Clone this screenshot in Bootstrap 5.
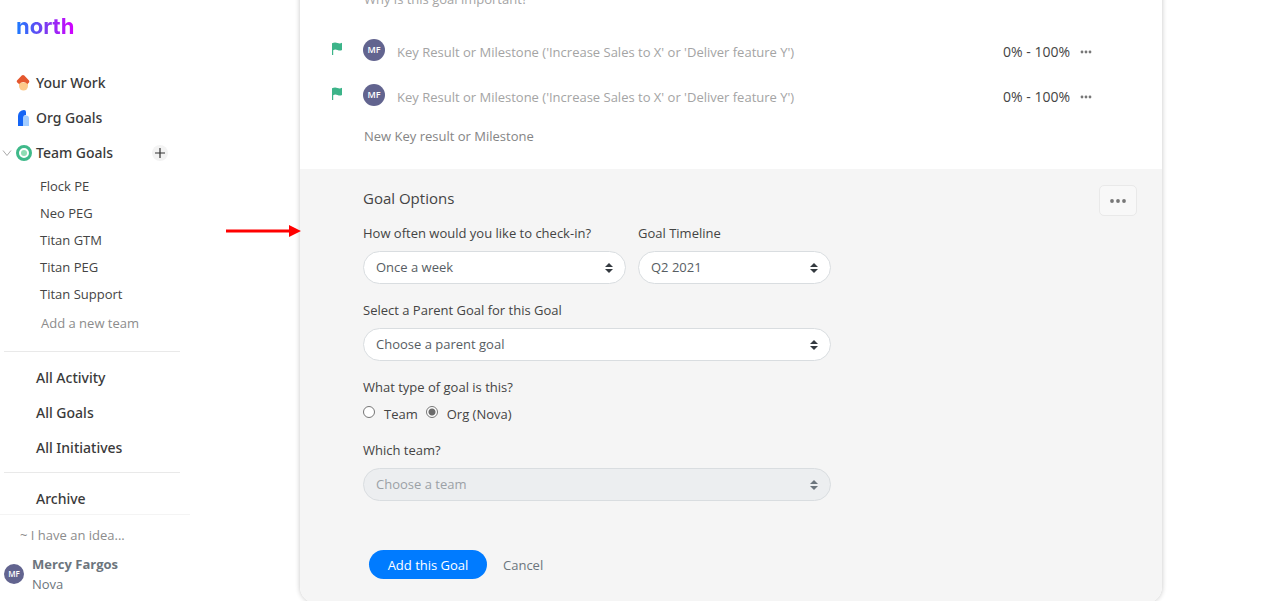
<!DOCTYPE html>
<html lang="en">
<head>
<meta charset="utf-8">
<meta name="viewport" content="width=device-width, initial-scale=1">
<title>north - New goal</title>
<link href="https://cdn.jsdelivr.net/npm/bootstrap@5.3.0/dist/css/bootstrap.min.css" rel="stylesheet">
<style>
  body { font-family: "Open Sans", "Noto Sans", sans-serif; font-size: 13px; line-height: 20px; color: #444; background: #fff; }
  a { color: inherit; text-decoration: none; }
  .sidebar { width: 190px; flex: none; }
  .sidebar > * { flex-shrink: 0; }
  .brand { font: 700 22px/28px Inter, sans-serif; padding: 12px 0 0 16px; height: 65px; }
  .brand a { background: linear-gradient(90deg, #1a7cff, #7a3cf0 50%, #d400ff); -webkit-background-clip: text; background-clip: text; color: transparent; }
  .side-item { height: 35px; font-family: "Noto Sans", sans-serif; font-size: 14px; font-weight: 500; color: #3a3a3a; }
  .side-item .slot { width: 36px; height: 16px; flex: none; padding-right: 4px; }
  .side-last { height: 33px; padding-top: 2px; }
  .teams { padding-top: 2px; }
  .sub-item { height: 27px; padding-left: 40px; }
  .sub-new { height: 32px; padding-left: 41px; color: #8c8c8c; }
  .rule { height: 1px; background: #e9e9e9; margin: 12px 10px 8px 4px; }
  .rule-low { margin-top: 7px; }
  .chevron { width: 10px; }
  .add-team { width: 16px; height: 16px; border: 0; border-radius: 50%; background: #f3f3f3; margin-right: 22px; }
  .foot-line { height: 1px; background: #f4f4f4; }
  .idea { color: #8c8c8c; padding-left: 20px; height: 39px; }
  .user { color: #6c757d; padding: 0 0 7px 4px; gap: 8px; }
  .avatar { border-radius: 50%; background: #62648f; color: #fff; flex: none; font-weight: 600; }
  .avatar-sm { width: 20px; height: 20px; font-size: 8px; }
  .avatar-md { width: 22px; height: 22px; font-size: 9px; margin: 0 12px 4px 0; }
  .main { padding: 0 113px 0 110px; }
  .goal-card { border-radius: 16px; box-shadow: 0 0 5px rgba(0,0,0,.24); margin-top: -40px; padding-top: 29px; overflow: hidden; background: #fff; }
  .why { height: 40px; padding-left: 64px; }
  .kr { height: 45px; padding: 0 68px 0 31px; }
  .range { font-size: 14px; }
  .flag { width: 12px; margin: 0 20px 6px 0; }
  .bare { border: 0; background: transparent; padding: 0; outline: 0; color: inherit; }
  .bare::placeholder { color: #a4a4a4; opacity: 1; }
  .new-kr { height: 50px; padding: 0 0 16px 64px; }
  .new-kr .bare::placeholder { color: #858585; }
  .options { background: #f5f5f5; padding: 16px 25px 24px 63px; }
  .options h2 { font-size: 15px; line-height: 26px; font-weight: 400; margin: 0; }
  .more { width: 38px; height: 31px; border: 1px solid #e9e9e9; border-radius: 5px; background: #f8f8f8; margin-bottom: 7px; }
  .fields { max-width: 468px; }
  .fields .form-label { display: block; margin: 0 0 8px; font-size: 13px; line-height: 20px; }
  .fields legend.form-label { margin-bottom: 7px; }
  .pick { height: 33px; border: 1px solid #d9dde0; border-radius: 17px; font-size: 13px; line-height: 20px; padding: 5px 24px 6px 12px; color: #575d63; background: #fff url("data:image/svg+xml,%3csvg xmlns='http://www.w3.org/2000/svg' viewBox='0 0 4 5'%3e%3cpath fill='%23343a40' d='M2 0L0 2h4zm0 5L0 3h4z'/%3e%3c/svg%3e") no-repeat right 12px center / 8px 10px; }
  .pick:disabled { color: #9ba1a6; background-color: #eceef0; background-image: url("data:image/svg+xml,%3csvg xmlns='http://www.w3.org/2000/svg' viewBox='0 0 4 5'%3e%3cpath fill='%236c757d' d='M2 0L0 2h4zm0 5L0 3h4z'/%3e%3c/svg%3e"); }
  .field { margin-bottom: 16px; }
  .how-often { flex: 263 1 0; }
  .timeline { flex: 193 1 0; }
  .tick { width: 12px; height: 12px; margin: 0 9px 4px 0; appearance: none; border: 1px solid #767676; border-radius: 50%; background: #fff; }
  .tick:checked { background: radial-gradient(circle, #6b6b6b 0 3px, #fff 4px); }
  .add-goal { height: 29px; width: 118px; border-radius: 15px; background: #007bff; color: #fff; border: 0; padding: 0; }
  .cancel { color: #6c757d; }
  .actions { gap: 16px; padding: 49px 0 0 6px; }
  .pointer { position: absolute; left: 226px; top: 225px; }
</style>
</head>
<body>
<div class="d-flex vh-100 overflow-hidden">
  <nav class="sidebar d-flex flex-column">
    <div class="brand"><a href="#">north</a></div>
    <a class="side-item d-flex align-items-center" href="#"><span class="slot d-flex justify-content-end">
      <svg width="16" height="16" viewBox="0 0 16 16"><path d="M3 7.500h9V11a4.500 4.500 0 0 1-9 0Z" fill="#fdc98a"/><path d="M7 0q.8 0 1.300.6L13 5.400q.7 1 0 2L11.500 9Q9.500 7 7.300 7T3 9L1 7.200q-.6-1 0-1.800L5.700.6Q6.200 0 7 0Z" fill="#e4572e"/></svg></span>Your Work</a>
    <a class="side-item d-flex align-items-center" href="#"><span class="slot d-flex justify-content-end">
      <svg width="16" height="16" viewBox="0 0 16 16"><path d="M7 5.500h3a3 3 0 0 1 3 3V16H6Z" fill="#a3cdff"/><path d="M2 16V6a6 6 0 0 1 6-6 2 2 0 0 1 2 2v3a3 3 0 0 0-3 3v8Z" fill="#1565f5"/></svg></span>Org Goals</a>
    <div class="side-item d-flex align-items-center"><span class="slot d-flex justify-content-end align-items-center">
      <svg class="chevron me-1" height="8" viewBox="0 0 10 8"><path d="M1 1.500 5 6.500 9 1.500" fill="none" stroke="#aaa"/></svg>
      <svg class="flex-shrink-0" width="16" height="16" viewBox="0 0 16 16"><circle cx="8" cy="8" r="6.500" fill="#fff" stroke="#3fb98a" stroke-width="3"/><circle cx="8" cy="8" r="3" fill="#8fdcb4"/></svg></span><a href="#">Team Goals</a>
      <button class="add-team ms-auto p-0 d-flex align-items-center justify-content-center" aria-label="Add team"><svg width="12" height="12" viewBox="0 0 12 12"><path d="M6 1v10M1 6h10" stroke="#333" stroke-width="1.200"/></svg></button></div>
    <div class="teams">
      <a class="sub-item d-flex align-items-center" href="#">Flock PE</a>
      <a class="sub-item d-flex align-items-center" href="#">Neo PEG</a>
      <a class="sub-item d-flex align-items-center" href="#">Titan GTM</a>
      <a class="sub-item d-flex align-items-center" href="#">Titan PEG</a>
      <a class="sub-item d-flex align-items-center" href="#">Titan Support</a>
      <a class="sub-new d-flex align-items-center" href="#">Add a new team</a>
    </div>
    <div class="rule"></div>
    <a class="side-item d-flex align-items-center" href="#"><span class="slot"></span>All Activity</a>
    <a class="side-item d-flex align-items-center" href="#"><span class="slot"></span>All Goals</a>
    <a class="side-item d-flex align-items-center" href="#"><span class="slot"></span>All Initiatives</a>
    <div class="rule rule-low"></div>
    <a class="side-item side-last d-flex align-items-center" href="#"><span class="slot"></span>Archive</a>
    <div class="mt-auto">
      <div class="foot-line"></div>
      <a class="idea d-flex align-items-center" href="#">~ I have an idea...</a>
      <a class="user d-flex align-items-center" href="#"><span class="avatar avatar-sm d-flex align-items-center justify-content-center">MF</span><span><strong class="d-block">Mercy Fargos</strong>Nova</span></a>
    </div>
  </nav>
  <main class="main flex-grow-1">
    <form class="goal-card">
      <div class="why"><input class="bare w-75" aria-label="Why" placeholder="Why is this goal important?"></div>
      <div class="kr d-flex align-items-center">
        <svg class="flag" height="13" viewBox="0 0 12 13"><path d="M1 1.200Q4 0 6.500 1T11 .7V8Q9 9 6.500 8T2.200 8.200V13H1Z" fill="#3cb489"/></svg>
        <span class="avatar avatar-md d-flex align-items-center justify-content-center">MF</span>
        <input class="bare flex-grow-1" aria-label="Key result 1" placeholder="Key Result or Milestone ('Increase Sales to X' or 'Deliver feature Y')">
        <span class="range">0% - 100%</span>
        <button type="button" class="bare ms-2 d-flex" aria-label="Key result menu"><svg width="16" height="4" viewBox="0 0 16 4" fill="#777"><circle cx="4" cy="2" r="1.400"/><circle cx="8" cy="2" r="1.400"/><circle cx="12" cy="2" r="1.400"/></svg></button>
      </div>
      <div class="kr d-flex align-items-center">
        <svg class="flag" height="13" viewBox="0 0 12 13"><path d="M1 1.200Q4 0 6.500 1T11 .7V8Q9 9 6.500 8T2.200 8.200V13H1Z" fill="#3cb489"/></svg>
        <span class="avatar avatar-md d-flex align-items-center justify-content-center">MF</span>
        <input class="bare flex-grow-1" aria-label="Key result 2" placeholder="Key Result or Milestone ('Increase Sales to X' or 'Deliver feature Y')">
        <span class="range">0% - 100%</span>
        <button type="button" class="bare ms-2 d-flex" aria-label="Key result menu"><svg width="16" height="4" viewBox="0 0 16 4" fill="#777"><circle cx="4" cy="2" r="1.400"/><circle cx="8" cy="2" r="1.400"/><circle cx="12" cy="2" r="1.400"/></svg></button>
      </div>
      <div class="new-kr d-flex align-items-center"><input class="bare w-75" aria-label="New key result" placeholder="New Key result or Milestone"></div>
      <section class="options">
        <div class="d-flex justify-content-between align-items-start">
          <h2>Goal Options</h2>
          <button type="button" class="more p-0 d-flex align-items-center justify-content-center" aria-label="Goal menu"><svg width="16" height="4" viewBox="0 0 16 4" fill="#777"><circle cx="2" cy="2" r="1.900"/><circle cx="8" cy="2" r="1.900"/><circle cx="14" cy="2" r="1.900"/></svg></button>
        </div>
        <div class="fields">
          <div class="field d-flex">
            <div class="how-often me-2 pe-1"><label class="form-label" for="often">How often would you like to check-in?</label>
              <select class="form-select pick" id="often"><option>Once a week</option></select></div>
            <div class="timeline"><label class="form-label" for="time">Goal Timeline</label>
              <select class="form-select pick" id="time"><option>Q2 2021</option></select></div>
          </div>
          <div class="field"><label class="form-label" for="parent">Select a Parent Goal for this Goal</label>
            <select class="form-select pick" id="parent"><option>Choose a parent goal</option></select></div>
          <fieldset class="field">
            <legend class="form-label float-none">What type of goal is this?</legend>
            <div class="d-flex">
              <label class="d-flex align-items-center me-2"><input class="tick" type="radio" name="kind">Team</label>
              <label class="d-flex align-items-center"><input class="tick" type="radio" name="kind" checked>Org (Nova)</label>
            </div>
          </fieldset>
          <div><label class="form-label" for="team">Which team?</label>
            <select class="form-select pick" id="team" disabled><option>Choose a team</option></select></div>
          <div class="actions d-flex align-items-center"><button type="submit" class="add-goal">Add this Goal</button><button type="button" class="bare cancel">Cancel</button></div>
        </div>
      </section>
    </form>
  </main>
</div>
<svg class="pointer" width="75" height="12" viewBox="0 0 75 12"><path d="M0 4.500H63V0L75 6 63 12V7.500H0Z" fill="#f00"/></svg>
<script src="https://cdn.jsdelivr.net/npm/bootstrap@5.3.0/dist/js/bootstrap.bundle.min.js"></script>
</body>
</html>
